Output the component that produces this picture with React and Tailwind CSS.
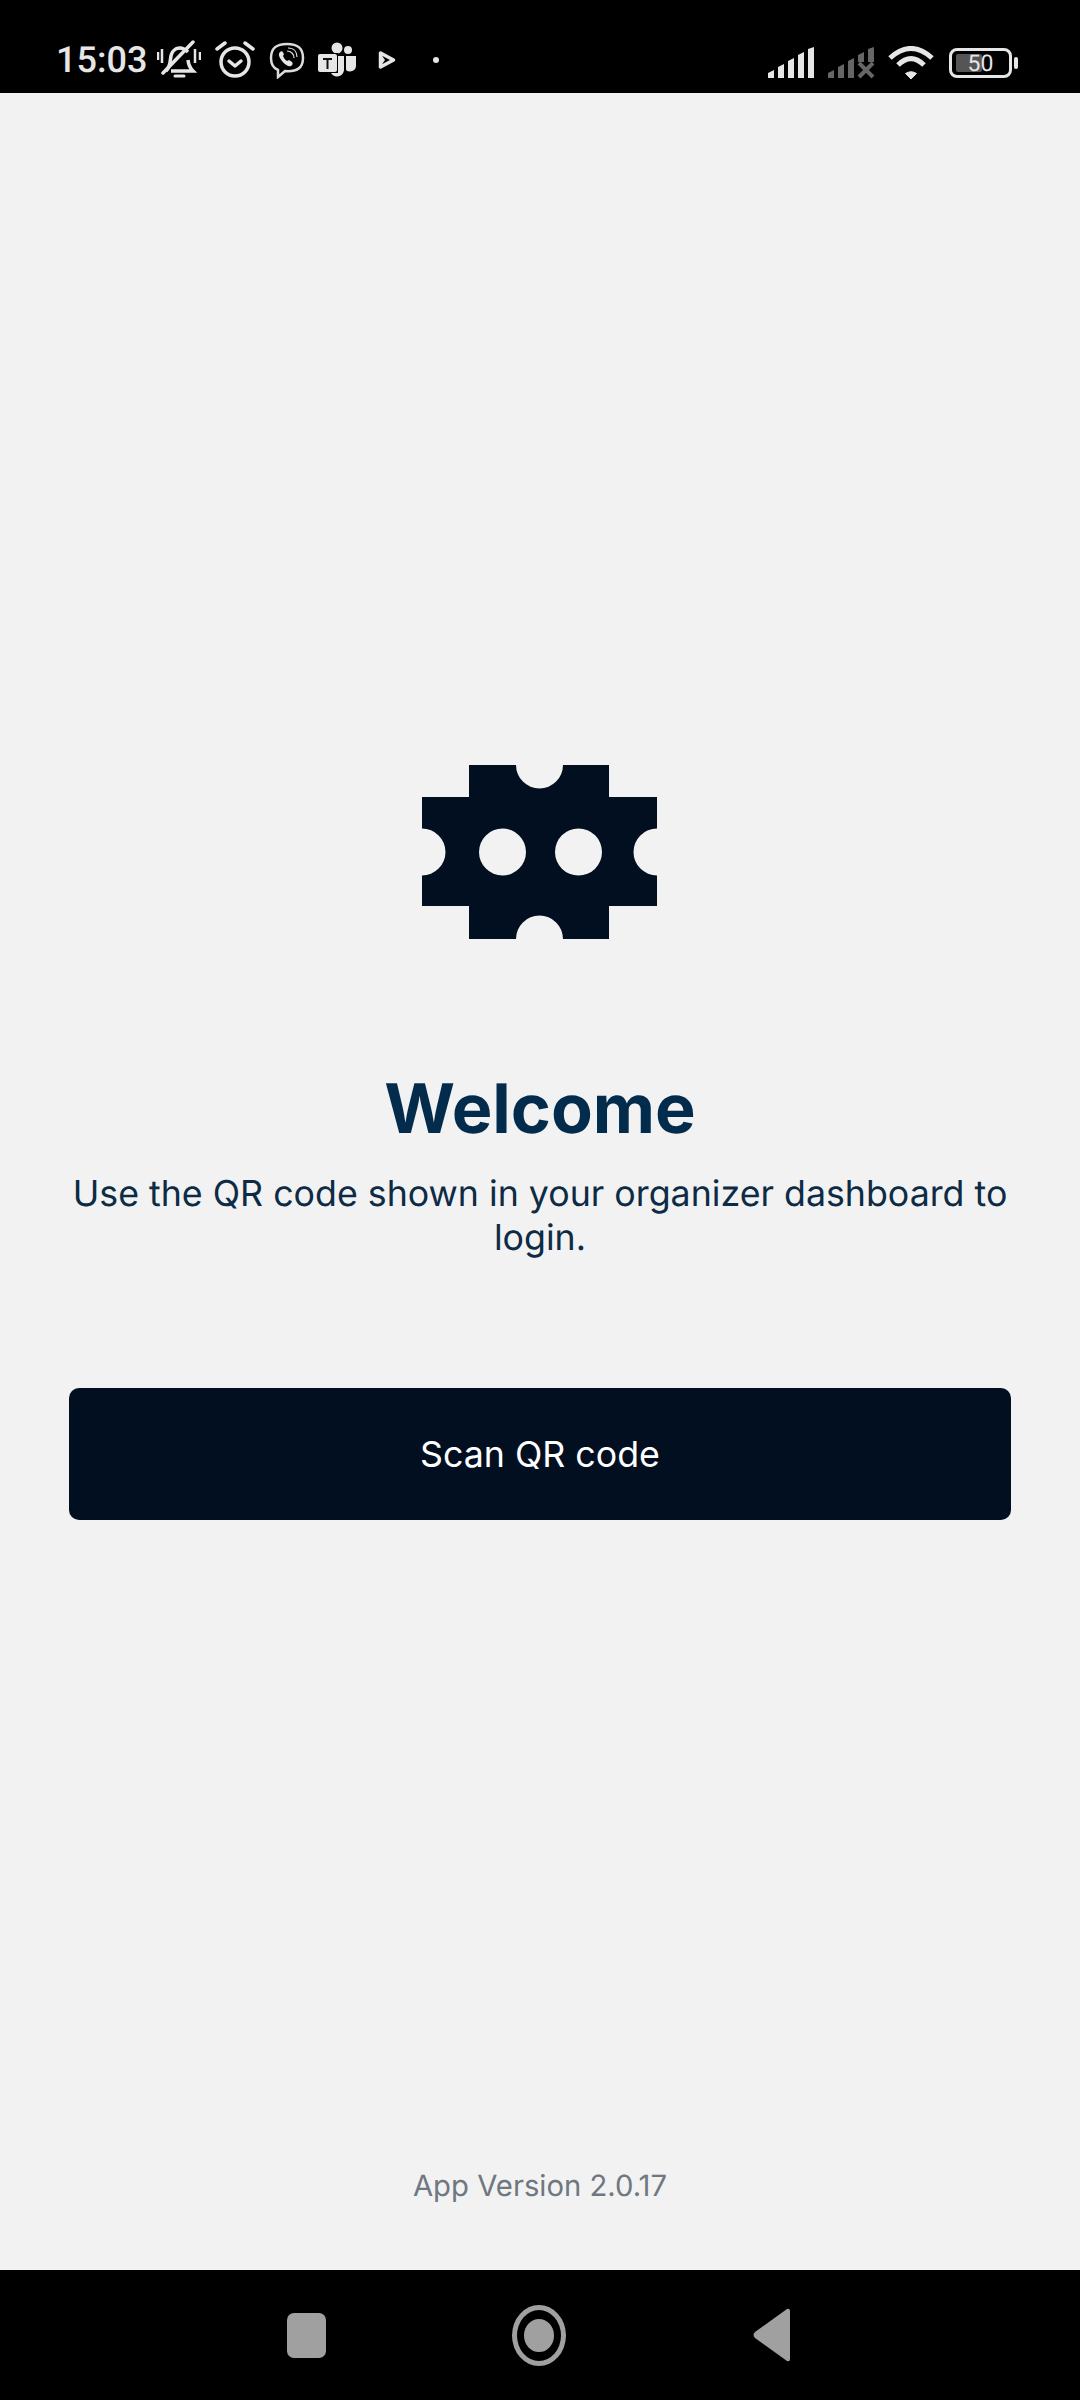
function StatusLeft() {
  return (
    <div className="flex items-center">
      <span className="text-[36px] leading-none font-medium text-[#e6e6e6] font-['Roboto',sans-serif] w-[100px] ml-[56px]">15:03</span>
      <svg width="44" height="40" viewBox="0 0 44 40" className="ml-[1px]" fill="none" stroke="#e6e6e6">
        <path d="M1 12v8M5 9v14M38 9v14M43 12v8" strokeWidth="2.5" />
        <path d="M9 31c3-3 4-6 4.500-12C14 12 18 8 23 8c4 0 6 2 8 4M31 20c.5 5 2 8 5 11H14" strokeWidth="3.500" />
        <path d="M18 36h9" strokeWidth="3" strokeLinecap="round" />
        <path d="M6 33 36 2" strokeWidth="3.500" strokeLinecap="round" />
      </svg>
      <svg width="40" height="38" viewBox="0 0 40 38" className="ml-[14px]" fill="none" stroke="#e6e6e6">
        <circle cx="20" cy="21" r="14" strokeWidth="3.500" />
        <path d="M14 20l6 5 6-5" strokeWidth="3.500" strokeLinecap="round" strokeLinejoin="round" />
        <path d="M2 8l8-6M38 8l-8-6" strokeWidth="3.500" strokeLinecap="round" />
      </svg>
      <svg width="36" height="37" viewBox="0 0 36 37" className="ml-[14px]" fill="none" stroke="#dcdcdc">
        <path d="M18 2C7 2 2 6 2 16c0 6 2 10 7 12v7l7-6c12 1 18-3 18-13C34 6 29 2 18 2z" strokeWidth="2.500" />
        <path d="M11 10c-2 2-1 5 2 9s7 6 9 5c2-1 2-3 1-4l-3-2-2 1c-2-1-3-3-4-5l1-2-2-3z" fill="#e6e6e6" stroke="none" />
        <path d="M18 9c4 0 7 3 7 7M19 6c6 0 9 4 9 9" strokeWidth="1.200" />
      </svg>
      <svg width="40" height="37" viewBox="0 0 40 37" className="ml-[12px]">
        <circle cx="20" cy="6" r="5.500" fill="#e6e6e6" />
        <circle cx="31" cy="8" r="4" fill="#e6e6e6" />
        <path d="M14 14h13v14a7 7 0 0 1-13 3z" fill="#e6e6e6" />
        <path d="M29 14h10v10a6 6 0 0 1-10 4z" fill="#e6e6e6" />
        <path d="M0 11h21v20H0z" fill="#000" />
        <rect x="1" y="12" width="19" height="18" rx="2" fill="#e6e6e6" />
        <path d="M6 16h9v2h-3.500v9h-2v-9H6z" fill="#111" />
      </svg>
      <svg width="18" height="20" viewBox="0 0 18 20" className="ml-[21px]" fill="none">
        <path d="M2.500 3 15.500 10 2.500 17z" stroke="#e6e6e6" strokeWidth="3.500" strokeLinejoin="round" />
        <path d="M2 3v14l5-7z" fill="#e6e6e6" />
      </svg>
      <div className="ml-[37px] w-[6px] h-[6px] rounded-full bg-[#e6e6e6]" />
    </div>
  )
}

function Signal({ color }) {
  return (
    <svg width="48" height="32" viewBox="0 0 48 32" fill={color}>
      <path d="M1 26l6-3v8H1zM11 20l6-3v14h-6zM21 14l6-3v20h-6zM31 8l6-3v26h-6zM41 2l6-2v31h-6z" />
    </svg>
  )
}

function StatusRight() {
  return (
    <div className="flex items-center mr-[62px]">
      <Signal color="#e6e6e6" />
      <svg width="48" height="32" viewBox="0 0 48 32" className="ml-[12px]" fill="#666">
        <path d="M1 26l6-3v8H1zM11 20l6-3v14h-6zM21 14l6-3v20h-6z" />
        <path d="M31 8l6-3v10h-6zM41 2l6-2v15h-6z" />
        <path d="M32 16l14 14M46 16 32 30" stroke="#666" strokeWidth="4" fill="none" />
      </svg>
      <svg width="46" height="34" viewBox="0 0 46 34" className="ml-[13px]" fill="none" stroke="#e6e6e6" strokeWidth="5">
        <path d="M2 12Q23-7 44 12" />
        <path d="M10 19Q23 6 36 19" />
        <path d="M17.500 27.500 23 33l5.500-5.500Q23 24 17.500 27.500z" fill="#e6e6e6" strokeWidth="1" />
      </svg>
      <div className="ml-[15px] relative w-[63px] h-[30px] rounded-[8px] border-[3px] border-[#e6e6e6] flex items-center">
        <div className="ml-[4px] w-[26px] h-[18px] rounded-[2px] bg-[#555]" />
        <span className="absolute inset-0 flex items-center justify-center text-[23px] leading-none text-[#e6e6e6] font-['Roboto',sans-serif]">50</span>
      </div>
      <div className="ml-[2px] w-[4px] h-[12px] rounded-[2px] bg-[#e6e6e6]" />
    </div>
  )
}

function Logo() {
  return (
    <svg width="235" height="174" viewBox="0 0 235 174" className="shrink-0 mr-[2px]">
      <path
        fillRule="evenodd"
        fill="#020f20"
        d="M47 0H94A23.500 23.500 0 0 0 141 0H187V32H235V63.500A23.500 23.500 0 0 0 235 110.500V141H187V174H141A23.500 23.500 0 0 0 94 174H47V141H0V110.500A23.500 23.500 0 0 0 0 63.500V32H47ZM57 87a23.500 23.500 0 1 0 47 0a23.500 23.500 0 1 0 -47 0ZM133 87a23.500 23.500 0 1 0 47 0a23.500 23.500 0 1 0 -47 0Z"
      />
    </svg>
  )
}

export default function App() {
  return (
    <div className="w-[1080px] h-[2400px] flex flex-col bg-[#f2f2f2] font-['Inter',sans-serif] [text-rendering:geometricPrecision]">
      <div className="h-[93px] shrink-0 bg-black flex items-end justify-between pb-[13px]">
        <StatusLeft />
        <StatusRight />
      </div>

      <div className="flex-1 flex flex-col items-center px-[69px] pt-[672px]">
        <Logo />
        <h1 className="mt-[128px] text-[68.25px] leading-[84px] font-bold text-[#032b4c] text-center">Welcome</h1>
        <p className="mt-[20px] text-[35.75px] leading-[44px] text-[#0d2b45] text-center w-full">
          Use the QR code shown in your organizer dashboard to login.
        </p>
        <button className="mt-[129px] w-full h-[132px] pt-[2px] rounded-[10px] bg-[#020f20] text-white text-[35.75px]">Scan QR code</button>
        <div className="mt-auto mb-[65px] text-[29.25px] leading-[36px] text-[#6f7780]">App Version 2.0.17</div>
      </div>

      <div className="h-[130px] shrink-0 bg-black flex items-center">
        <div className="ml-[287px] w-[39px] h-[45px] rounded-[7px] bg-[#a0a0a0]" />
        <div className="ml-[186px] w-[54px] h-[61px] rounded-[50%] border-[5px] border-[#a0a0a0] flex items-center justify-center">
          <div className="w-[30px] h-[33px] rounded-[50%] bg-[#a0a0a0]" />
        </div>
        <svg width="38" height="54" viewBox="0 0 38 54" className="ml-[187px]" fill="#a0a0a0">
          <path d="M34 1 2 24q-3 3 0 6l32 23q3 1 3-2V3q0-3-3-2z" />
        </svg>
      </div>
    </div>
  )
}
